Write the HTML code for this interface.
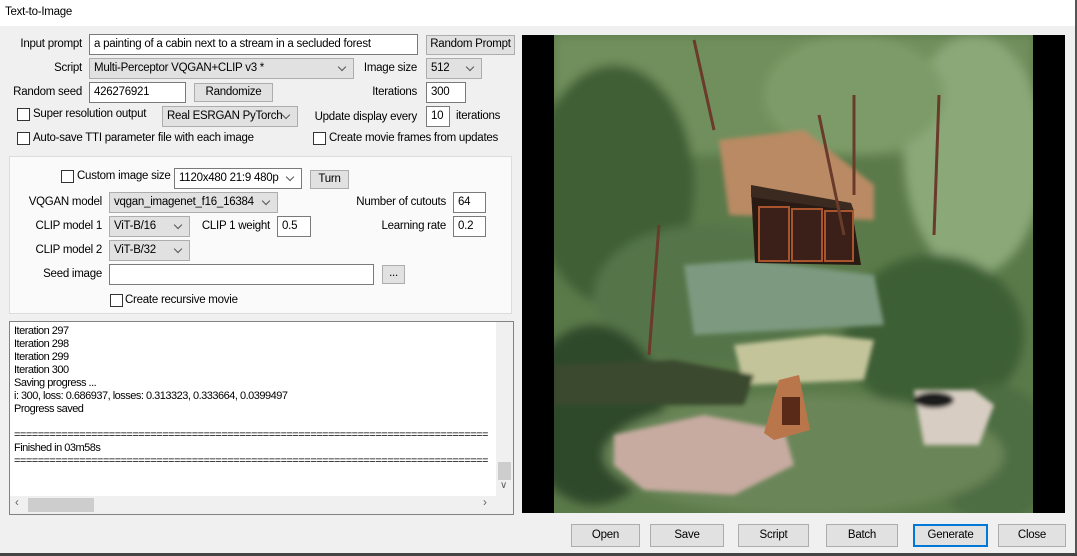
<!DOCTYPE html>
<html><head><meta charset="utf-8">
<style>
*{box-sizing:border-box;margin:0;padding:0}
body{width:1077px;height:556px;background:#f0f0f0;font-family:"Liberation Sans",Arial,sans-serif;font-size:11.5px;letter-spacing:-0.25px;color:#000;position:relative;overflow:hidden}
.a{position:absolute;white-space:nowrap}
.title{left:0;top:0;width:1077px;height:26px;background:#fff}
.lbl{position:absolute;text-align:right;white-space:nowrap;line-height:14px}
.tb{position:absolute;background:#fff;border:1px solid #7a7a7a;padding:2px 4px;line-height:14px;white-space:nowrap;overflow:hidden}
.btn{position:absolute;background:#e1e1e1;border:1px solid #adadad;text-align:center;line-height:17px;white-space:nowrap}
.cb{position:absolute;background:#e1e1e1;border:1px solid #adadad;padding:2px 18px 2px 4px;line-height:14px;white-space:nowrap;overflow:hidden}
.cb.w{background:#fff;border-color:#7a7a7a}
.cb:after{content:"";position:absolute;right:8px;top:5px;width:5px;height:5px;border-right:1px solid #555;border-bottom:1px solid #555;transform:rotate(45deg)}
.chk{position:absolute;width:13px;height:13px;border:1px solid #333;background:#fff}
.log{font-size:11px;line-height:13px;letter-spacing:-0.5px}
</style></head><body>
<div class="a title"></div>
<div class="a" style="left:5px;top:6px">Text-to-Image</div>
<div class="a" style="right:0;top:0;width:2px;height:556px;background:#555"></div>
<div class="a" style="left:0;bottom:0;width:1077px;height:3px;background:#444"></div>

<div class="lbl" style="right:995px;top:37px">Input prompt</div>
<div class="tb" style="left:89px;top:34px;width:329px;height:21px">a painting of a cabin next to a stream in a secluded forest</div>
<div class="btn" style="left:426px;top:35px;width:89px;height:20px">Random Prompt</div>

<div class="lbl" style="right:995px;top:61px">Script</div>
<div class="cb" style="left:89px;top:58px;width:265px;height:21px">Multi-Perceptor VQGAN+CLIP v3 *</div>
<div class="lbl" style="right:660px;top:61px">Image size</div>
<div class="cb" style="left:426px;top:58px;width:56px;height:21px">512</div>

<div class="lbl" style="right:995px;top:85px">Random seed</div>
<div class="tb" style="left:89px;top:82px;width:97px;height:21px">426276921</div>
<div class="btn" style="left:194px;top:83px;width:79px;height:19px">Randomize</div>
<div class="lbl" style="right:660px;top:85px">Iterations</div>
<div class="tb" style="left:426px;top:82px;width:40px;height:21px">300</div>

<div class="chk" style="left:17px;top:108px"></div>
<div class="a" style="left:33px;top:108px">Super resolution output</div>
<div class="cb" style="left:162px;top:106px;width:136px;height:21px">Real ESRGAN PyTorch</div>
<div class="lbl" style="right:660px;top:110px">Update display every</div>
<div class="tb" style="left:426px;top:106px;width:24px;height:21px">10</div>
<div class="a" style="left:456px;top:110px">iterations</div>

<div class="chk" style="left:17px;top:132px"></div>
<div class="a" style="left:33px;top:132px">Auto-save TTI parameter file with each image</div>
<div class="chk" style="left:313px;top:132px"></div>
<div class="a" style="left:329px;top:132px">Create movie frames from updates</div>

<div class="a" style="left:9px;top:156px;width:503px;height:158px;background:#fafafa;border:1px solid #dcdcdc"></div>
<div class="chk" style="left:61px;top:170px"></div>
<div class="a" style="left:77px;top:170px">Custom image size</div>
<div class="cb w" style="left:174px;top:168px;width:128px;height:21px">1120x480 21:9 480p</div>
<div class="btn" style="left:310px;top:170px;width:39px;height:19px">Turn</div>

<div class="lbl" style="right:975px;top:195px">VQGAN model</div>
<div class="cb" style="left:109px;top:192px;width:169px;height:21px">vqgan_imagenet_f16_16384</div>
<div class="lbl" style="right:631px;top:195px">Number of cutouts</div>
<div class="tb" style="left:453px;top:192px;width:33px;height:21px">64</div>

<div class="lbl" style="right:975px;top:219px">CLIP model 1</div>
<div class="cb" style="left:109px;top:216px;width:81px;height:21px">ViT-B/16</div>
<div class="lbl" style="right:807px;top:219px">CLIP 1 weight</div>
<div class="tb" style="left:277px;top:216px;width:34px;height:21px">0.5</div>
<div class="lbl" style="right:631px;top:219px">Learning rate</div>
<div class="tb" style="left:453px;top:216px;width:33px;height:21px">0.2</div>

<div class="lbl" style="right:975px;top:243px">CLIP model 2</div>
<div class="cb" style="left:109px;top:240px;width:81px;height:21px">ViT-B/32</div>

<div class="lbl" style="right:975px;top:267px">Seed image</div>
<div class="tb" style="left:109px;top:264px;width:265px;height:21px"></div>
<div class="btn" style="left:382px;top:265px;width:23px;height:19px;line-height:15px">...</div>

<div class="chk" style="left:110px;top:294px"></div>
<div class="a" style="left:125px;top:294px">Create recursive movie</div>

<div class="a" style="left:9px;top:321px;width:505px;height:194px;background:#fff;border:1px solid #828282;overflow:hidden">
<div class="a log" style="left:4px;top:3px">Iteration 297<br>Iteration 298<br>Iteration 299<br>Iteration 300<br>Saving progress ...<br>i: 300, loss: 0.686937, losses: 0.313323, 0.333664, 0.0399497<br>Progress saved<br><br>================================================================================<br>Finished in 03m58s<br>================================================================================</div>
<div class="a" style="left:486px;top:0;width:17px;height:174px;background:#f0f0f0"></div>
<div class="a" style="left:488px;top:140px;width:13px;height:18px;background:#cdcdcd"></div>
<div class="a" style="left:490px;top:158px;font-size:10px;color:#606060">&#8744;</div>
<div class="a" style="left:0;top:174px;width:503px;height:18px;background:#f0f0f0"></div>
<div class="a" style="left:18px;top:176px;width:66px;height:14px;background:#cdcdcd"></div>
<div class="a" style="left:5px;top:175px;color:#606060">&#8249;</div>
<div class="a" style="left:473px;top:175px;color:#606060">&#8250;</div>
</div>

<div class="a" style="left:522px;top:35px;width:543px;height:478px;background:#000"></div>
<svg class="a" style="left:554px;top:35px" width="479" height="478" viewBox="0 0 479 478">
<defs><filter id="b"><feGaussianBlur stdDeviation="5"/></filter><filter id="s"><feGaussianBlur stdDeviation="2"/></filter></defs>
<rect width="479" height="478" fill="#5b7a4a"/>
<g filter="url(#b)">
<rect x="0" y="0" width="479" height="120" fill="#6f8f5c"/>
<ellipse cx="60" cy="150" rx="80" ry="120" fill="#3f5e35"/>
<ellipse cx="420" cy="120" rx="70" ry="120" fill="#8aa878"/>
<ellipse cx="300" cy="60" rx="90" ry="60" fill="#7d9b68"/>
<ellipse cx="150" cy="260" rx="110" ry="70" fill="#547548"/>
<ellipse cx="380" cy="300" rx="90" ry="80" fill="#3e5e36"/>
<ellipse cx="40" cy="380" rx="70" ry="90" fill="#2f4a2a"/>
<ellipse cx="440" cy="420" rx="60" ry="70" fill="#4d6d42"/>
<ellipse cx="250" cy="420" rx="200" ry="60" fill="#6a8658"/>
</g>
<g filter="url(#s)">
<polygon points="165,105 250,95 320,150 320,185 175,180" fill="#b98a63"/>
<polygon points="130,230 200,225 320,240 330,290 140,300" fill="#7d9a80"/>
<polygon points="180,310 270,300 320,305 310,345 190,350" fill="#c4c49a"/>
<polygon points="60,400 150,380 230,395 240,430 180,460 90,455 60,430" fill="#c7aaa0"/>
<polygon points="360,355 420,355 440,370 425,410 370,410" fill="#d8cdc2"/>
<ellipse cx="380" cy="365" rx="20" ry="8" fill="#1a1a1a"/>
<polygon points="0,330 120,325 200,340 190,370 0,370" fill="#3a4a2e"/>
</g>
<polygon points="197,155 297,170 307,230 201,228" fill="#2a1a14"/>
<polygon points="197,150 297,168 300,176 197,162" fill="#3a2a20"/>
<rect x="205" y="172" width="30" height="54" fill="#3a2018" stroke="#a8542c" stroke-width="2"/>
<rect x="238" y="174" width="30" height="52" fill="#3a2018" stroke="#a8542c" stroke-width="2"/>
<rect x="271" y="176" width="28" height="50" fill="#3a2018" stroke="#a8542c" stroke-width="2"/>
<polygon points="225,345 245,340 256,395 220,405 210,398" fill="#b8764a"/>
<rect x="228" y="362" width="18" height="28" fill="#5a2a18"/>
<g stroke="#6a3a2a" stroke-width="3" fill="none">
<path d="M140 5 L160 95"/><path d="M300 60 L300 160"/><path d="M265 80 L290 200"/><path d="M385 60 L380 200"/><path d="M105 190 L95 320"/></g>
</svg>

<div class="btn" style="left:571px;top:524px;width:69px;height:23px;line-height:21px">Open</div>
<div class="btn" style="left:650px;top:524px;width:74px;height:23px;line-height:21px">Save</div>
<div class="btn" style="left:738px;top:524px;width:71px;height:23px;line-height:21px">Script</div>
<div class="btn" style="left:826px;top:524px;width:72px;height:23px;line-height:21px">Batch</div>
<div class="btn" style="left:913px;top:524px;width:75px;height:23px;line-height:19px;border:2px solid #0078d7">Generate</div>
<div class="btn" style="left:998px;top:524px;width:68px;height:23px;line-height:21px">Close</div>
</body></html>
